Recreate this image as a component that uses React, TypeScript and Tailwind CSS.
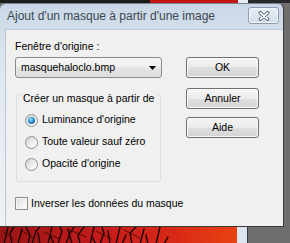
function Radio({ checked }: { checked?: boolean }) {
    return (
        <span className="flex h-[13px] w-[13px] shrink-0 items-center justify-center rounded-full border border-[#8e8f8f] bg-[linear-gradient(135deg,#cfcfcf,#f4f4f4_65%,#ffffff)]">
            {checked && (
                <span className="h-[7px] w-[7px] rounded-full bg-[radial-gradient(circle_at_40%_35%,#9fe8ff_0%,#2b8fcf_45%,#164a75_100%)]" />
            )}
        </span>
    )
}

function Button({ label }: { label: string }) {
    return (
        <div className="flex h-[21px] w-[73px] items-center justify-center rounded-[3px] border border-[#707070] bg-[linear-gradient(#f4f4f4,#ececec_50%,#dfdfdf_50%,#d4d4d4)] shadow-[inset_0_0_0_1px_#fafafa] text-black">
            {label}
        </div>
    )
}

function Trees() {
    return (
        <svg width="237" height="17" viewBox="0 0 237 17" className="block">
            <defs>
                <linearGradient id="red" x1="0" x2="1" y1="0" y2="0">
                    <stop offset="0" stopColor="#9a1414" />
                    <stop offset="0.45" stopColor="#c81c1c" />
                    <stop offset="0.75" stopColor="#d92a16" />
                    <stop offset="1" stopColor="#ea4212" />
                </linearGradient>
            </defs>
            <rect width="237" height="17" fill="url(#red)" />
            <g stroke="#1a0505" strokeWidth="1.4" fill="none" strokeLinecap="round">
                <path d="M4 17 L8 0 M12 17 L10 6 L14 0 M18 17 L22 2" />
                <path d="M28 17 L30 8 L26 0 M32 17 L36 4 L40 0 M40 17 L38 6" />
                <path d="M48 17 L52 0 M54 17 L50 8 M58 17 L62 4 L60 0" />
                <path d="M66 17 L70 6 L74 0 M72 17 L68 2 M80 17 L78 8 L84 0" />
                <path d="M90 17 L94 0 M96 17 L92 10 M100 17 L104 6 L102 0" />
                <path d="M110 17 L108 4 M116 17 L120 0 M122 17 L126 8" />
                <path d="M132 17 L130 6 L136 0 M140 17 L144 2 M148 17 L146 8" />
                <path d="M156 17 L160 0 M164 17 L168 10" />
            </g>
            <g stroke="#3a0808" strokeWidth="0.8" fill="none">
                <path d="M2 4 L14 12 M20 3 L34 11 M44 5 L60 12 M70 3 L86 10 M96 4 L112 12 M124 3 L140 11" />
            </g>
        </svg>
    )
}

export default function App() {
    return (
        <div className="flex h-[243px] w-[290px] flex-col overflow-hidden bg-[#6e6e6e] font-['Liberation_Sans',Arial,sans-serif] text-[10.5px] text-black">
            {/* background above the window */}
            <div className="flex h-[3px] shrink-0">
                <div className="w-[150px] bg-[#1c1c1c]" />
                <div className="w-[88px] bg-[#c21616]" />
                <div className="w-[10px] bg-[#e4ecf4]" />
                <div className="flex-1 bg-[#2a2a2a]" />
            </div>

            <div className="flex h-[224px] shrink-0">
                {/* dialog window */}
                <div className="flex w-[284px] flex-col rounded-t-[6px] border-t border-r border-b border-t-[#7a8593] border-r-[#3c3c3c] border-b-[#3c3c3c] bg-[linear-gradient(180deg,#c9d7e6,#dde6ef_25%,#e9eef4_70%,#eef1f5)]">
                    {/* title bar */}
                    <div className="flex h-[25px] shrink-0 items-start">
                        <span className="ml-[7px] mt-[5px] text-[12px] leading-[15px] text-[#3b4652]">
                            Ajout d'un masque à partir d'une image
                        </span>
                        <div className="ml-auto mr-[4px] mt-[3px] flex h-[17px] w-[31px] items-center justify-center rounded-[3px] border border-[#8d9cb0] bg-[linear-gradient(#e6edf5,#d3deea)] shadow-[inset_0_0_0_1px_#f2f6fa]">
                            <svg width="12" height="10" viewBox="0 0 12 10">
                                <path d="M2.5 2 L9.5 8 M9.5 2 L2.5 8" stroke="#4a5666" strokeWidth="3.6" strokeLinecap="round" />
                                <path d="M2.5 2 L9.5 8 M9.5 2 L2.5 8" stroke="#ffffff" strokeWidth="1.8" strokeLinecap="round" />
                            </svg>
                        </div>
                    </div>

                    {/* client area */}
                    <div className="ml-[5px] flex flex-1 border-t border-l border-[#b9c6d4] bg-[#f0f0f0] pl-[9px]">
                        <div className="flex w-[171px] flex-col">
                            <div className="mt-[9px] h-[14px] leading-[14px]">Fenêtre d'origine :</div>

                            <div className="mt-[4px] flex h-[21px] w-[147px] items-center rounded-[3px] border border-[#8a8a8a] bg-[linear-gradient(#f6f6f6,#efefef_50%,#e5e5e5_50%,#dedede)] pl-[5px] pr-[5px]">
                                <span className="flex-1">masquehaloclo.bmp</span>
                                <svg width="7" height="4" viewBox="0 0 7 4">
                                    <path d="M0 0 H7 L3.5 4 Z" fill="#000" />
                                </svg>
                            </div>

                            {/* group box */}
                            <div className="ml-[1px] mt-[13px] w-[145px]">
                                <div className="flex h-[14px] leading-[14px]">
                                    <div className="mt-[3px] w-[6px] rounded-tl-[3px] border-t border-l border-[#d5dfe5]" />
                                    <span className="pl-[1px] pr-[2px]">Créer un masque à partir de</span>
                                    <div className="mt-[3px] flex-1 rounded-tr-[3px] border-t border-r border-[#d5dfe5]" />
                                </div>
                                <div className="flex h-[77px] flex-col rounded-b-[3px] border-r border-b border-l border-[#d5dfe5] pl-[8px] pt-[4px]">
                                    <div className="flex h-[22px] items-center gap-[4px]">
                                        <Radio checked />
                                        <span>Luminance d'origine</span>
                                    </div>
                                    <div className="flex h-[22px] items-center gap-[4px]">
                                        <Radio />
                                        <span>Toute valeur sauf zéro</span>
                                    </div>
                                    <div className="flex h-[22px] items-center gap-[4px]">
                                        <Radio />
                                        <span>Opacité d'origine</span>
                                    </div>
                                </div>
                            </div>

                            <div className="mt-[15px] flex h-[13px] items-center gap-[3px] whitespace-nowrap">
                                <span className="h-[13px] w-[13px] shrink-0 border border-[#8f8f8f] bg-[linear-gradient(135deg,#d6d6d6,#f2f2f2_60%,#ffffff)] shadow-[inset_0_0_0_1px_#f4f4f4]" />
                                <span>Inverser les données du masque</span>
                            </div>
                        </div>

                        <div className="flex flex-col pt-[27px]">
                            <Button label="OK" />
                            <div className="mt-[10px]">
                                <Button label="Annuler" />
                            </div>
                            <div className="mt-[8px]">
                                <Button label="Aide" />
                            </div>
                        </div>
                    </div>
                </div>
                <div className="flex-1 bg-[#6e6e6e]" />
            </div>

            {/* background below the window */}
            <div className="flex flex-1">
                <Trees />
                <div className="w-[10px] bg-[#dbe5ef]" />
                <div className="w-px bg-[#3a3a3a]" />
                <div className="flex-1 bg-[#6e6e6e]" />
            </div>
        </div>
    )
}
